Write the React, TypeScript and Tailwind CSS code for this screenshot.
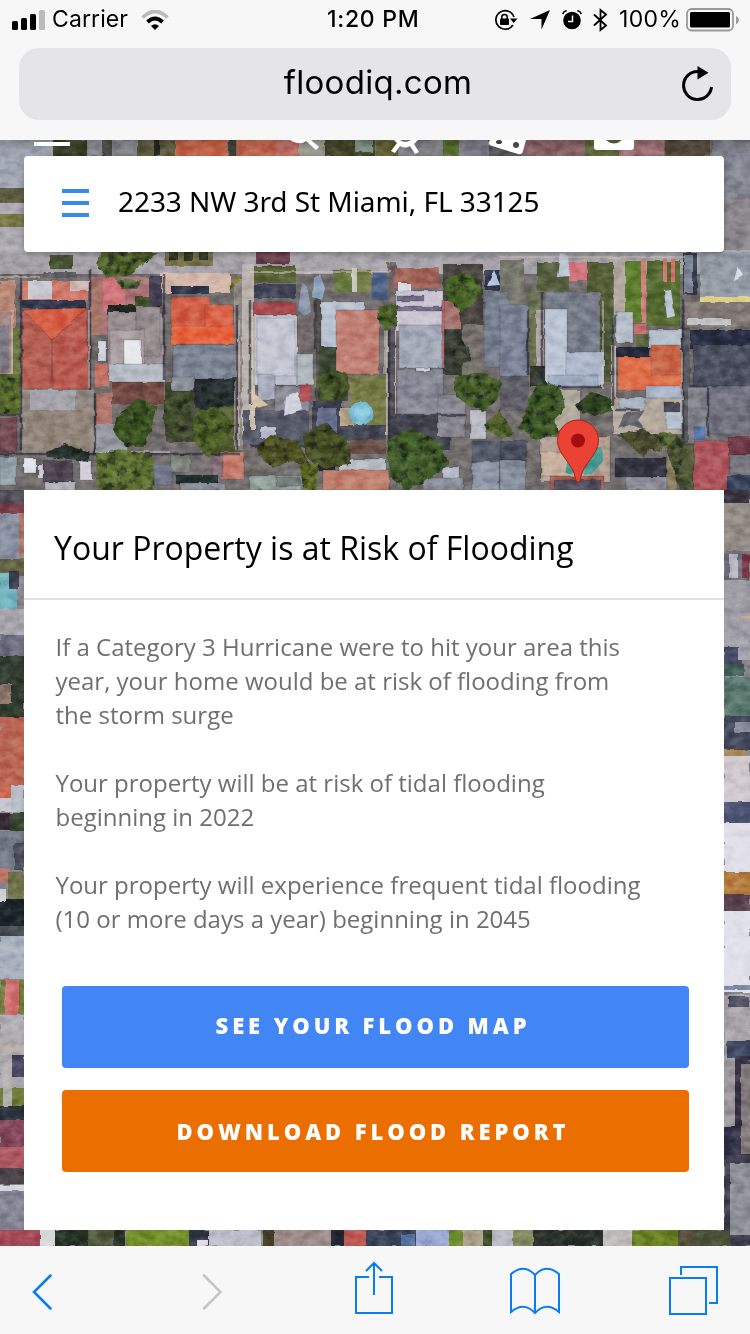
import React from "react";

type Block = [number, number, number, number, string];
type Shape = [string, string];

const ground: Block[] = [
  [0, 140, 750, 1106, "#8b888d"],
  [0, 140, 750, 16, "#77736c"],
  [0, 250, 750, 26, "#a7a3a9"],
  [0, 140, 53, 60, "#a3a8b4"],
  [0, 200, 24, 50, "#aca8ae"],
  [0, 188, 24, 15, "#5e5c40"],
  [0, 214, 24, 13, "#7a7a48"],
  [0, 274, 750, 218, "#736e6c"],
];

const strip: Block[] = [
  [53, 140, 34, 16, "#3c4227"], [87, 140, 50, 16, "#8d8e93"], [102, 140, 10, 16, "#4b4c45"],
  [137, 140, 38, 16, "#625e40"], [154, 140, 6, 16, "#262a24"], [175, 140, 52, 16, "#cf6a4b"],
  [228, 140, 8, 16, "#454037"], [237, 140, 62, 16, "#cc6b50"], [276, 140, 22, 16, "#c8766a"],
  [299, 140, 26, 16, "#a0a091"], [325, 140, 50, 16, "#484c2b"], [355, 140, 18, 12, "#82948b"],
  [376, 140, 22, 16, "#686738"], [398, 140, 45, 16, "#8a898e"], [443, 140, 16, 16, "#5a722b"],
  [459, 140, 30, 16, "#858490"], [489, 140, 32, 16, "#595455"], [524, 140, 60, 16, "#92696b"],
  [585, 140, 34, 16, "#636b3c"], [619, 140, 45, 16, "#a8787d"], [665, 140, 45, 16, "#574e3e"],
  [713, 140, 37, 58, "#868892"], [724, 198, 26, 52, "#8b858b"],
];

const yards: Block[] = [
  [50, 255, 23, 14, "#43502f"], [43, 272, 34, 6, "#5b5c5f"], [165, 250, 48, 16, "#77724a"],
  [169, 252, 9, 8, "#2f3621"], [184, 252, 9, 8, "#2f3621"], [199, 252, 9, 8, "#2f3621"],
  [160, 273, 70, 20, "#d3b9aa"], [171, 286, 38, 8, "#34364b"], [256, 250, 34, 14, "#693f49"],
  [254, 266, 42, 17, "#596235"], [250, 284, 46, 14, "#414456"],
  [334, 270, 18, 22, "#64763b"], [357, 270, 14, 22, "#78804a"], [352, 268, 5, 24, "#cac5bd"],
  [0, 280, 15, 95, "#b98a76"], [0, 312, 12, 60, "#a38682"], [0, 325, 9, 48, "#807c85"],
  [13, 328, 8, 50, "#6b7540"], [0, 374, 20, 40, "#546530"],
  [22, 281, 66, 19, "#cd7768"], [28, 281, 24, 18, "#c9c9ce"], [70, 281, 19, 10, "#d0b9b4"],
  [22, 300, 64, 9, "#33384d"],
  [91, 277, 58, 58, "#a87172"], [92, 280, 9, 55, "#a57767"], [103, 278, 22, 32, "#cf7378"],
  [107, 305, 53, 10, "#20291e"], [135, 296, 22, 12, "#40512b"], [149, 276, 13, 30, "#444050"],
  [96, 336, 13, 27, "#6e6d6c"], [95, 363, 14, 24, "#c06d60"],
  [112, 382, 52, 22, "#744a43"], [22, 389, 72, 64, "#928a81"], [30, 390, 45, 20, "#a4a3aa"],
  [26, 410, 65, 38, "#918477"], [96, 393, 16, 32, "#ae7469"], [96, 424, 30, 28, "#9698a0"],
  [165, 382, 42, 60, "#3f452f"], [195, 378, 40, 30, "#292e37"], [205, 404, 35, 50, "#545d31"],
  [234, 280, 9, 170, "#8f8780"], [242, 264, 12, 170, "#bab2ad"],
  [243, 410, 66, 36, "#575a67"], [250, 310, 5, 120, "#d1c4b2"],
  [297, 303, 21, 48, "#746b6c"], [316, 294, 5, 130, "#57534b"],
  [319, 346, 29, 55, "#3e4834"], [350, 376, 36, 63, "#777b45"],
  [312, 401, 30, 50, "#3c4050"], [340, 425, 46, 16, "#434652"], [317, 408, 20, 25, "#666c88"],
  [340, 408, 14, 18, "#b5a387"], [350, 440, 36, 14, "#6b5147"],
  [386, 330, 10, 105, "#b7aaa3"], [388, 318, 7, 130, "#54525a"],
  [372, 272, 17, 28, "#4d6386"], [387, 262, 9, 36, "#6d6664"],
  [394, 268, 45, 20, "#a26559"], [398, 283, 13, 8, "#dadde5"],
  [443, 264, 40, 110, "#4c463f"], [444, 301, 16, 28, "#a3706a"], [445, 330, 16, 45, "#363b33"],
  [462, 325, 25, 50, "#77716c"],
  [390, 416, 60, 34, "#41424b"], [485, 270, 20, 20, "#31384e"],
  [500, 260, 24, 45, "#76766b"], [537, 262, 32, 29, "#596141"], [569, 262, 18, 19, "#d0707a"],
  [587, 262, 26, 90, "#566036"], [600, 312, 13, 70, "#4d5836"],
  [527, 290, 14, 75, "#6d7152"], [536, 310, 8, 58, "#aaa49e"],
  [614, 260, 11, 55, "#b2a8a0"], [625, 261, 17, 61, "#5c7c2b"], [641, 259, 5, 64, "#cb8179"],
  [647, 261, 33, 65, "#566b30"], [663, 259, 4, 23, "#d1756f"], [671, 259, 4, 23, "#d1756f"],
  [634, 324, 12, 10, "#c56e69"], [636, 334, 12, 14, "#566139"],
  [683, 253, 14, 42, "#34404e"], [684, 255, 9, 38, "#7d8594"], [700, 252, 50, 45, "#939ba4"],
  [700, 297, 50, 5, "#ddce89"], [685, 302, 65, 25, "#837a76"], [687, 318, 44, 7, "#c3c1c5"],
  [685, 330, 65, 18, "#292d3f"],
  [612, 347, 38, 10, "#262a3a"], [611, 345, 5, 65, "#bdb3ab"],
  [681, 328, 9, 115, "#5a5b60"], [613, 398, 70, 36, "#b5aa9d"],
  [688, 388, 20, 55, "#808087"], [555, 390, 25, 42, "#b0a89c"],
  [530, 366, 35, 20, "#33382f"], [500, 376, 29, 35, "#616067"],
];

const roofs: Block[] = [
  [108, 312, 55, 59, "#9a8f91"], [136, 307, 24, 49, "#968c8d"], [110, 330, 34, 34, "#aa9e9f"],
  [124, 340, 17, 25, "#e8e9ed"], [109, 364, 56, 18, "#b5bcc4"], [98, 341, 8, 19, "#d4d7dd"],
  [171, 297, 39, 30, "#d15d44"], [205, 305, 28, 22, "#d96246"],
  [171, 326, 63, 18, "#e5633b"], [173, 345, 61, 34, "#7e8594"], [172, 377, 22, 14, "#8e929b"],
  [253, 302, 43, 14, "#a94d50"],
  [254, 315, 43, 70, "#bec1cd"], [257, 318, 38, 58, "#c4c7d1"], [297, 354, 16, 31, "#adb5b9"],
  [258, 374, 17, 26, "#aaaebd"], [275, 386, 34, 25, "#8a8994"], [300, 385, 11, 16, "#b34f54"],
  [321, 302, 43, 45, "#bac3d1"], [336, 310, 43, 64, "#c08072"],
  [396, 291, 47, 40, "#cbc5d2"], [397, 296, 27, 5, "#736b85"], [397, 306, 45, 5, "#736b85"],
  [399, 325, 43, 43, "#a5aab8"], [397, 370, 46, 45, "#898a95"], [438, 395, 27, 42, "#8b8993"],
  [416, 368, 15, 3, "#d7d7dc"],
  [484, 292, 25, 75, "#757c8b"], [500, 305, 28, 71, "#7c8394"],
  [545, 292, 55, 62, "#777d87"], [545, 309, 22, 75, "#bcc5d4"], [566, 352, 38, 34, "#b0b9ca"],
  [548, 375, 50, 12, "#a1adbf"],
  [616, 312, 17, 31, "#b7bfc9"], [649, 330, 33, 18, "#b4bfca"],
  [618, 357, 64, 33, "#dd6e47"], [651, 345, 30, 30, "#c86849"], [646, 386, 35, 12, "#afb9ca"],
  [619, 398, 26, 11, "#a8b1bf"], [666, 411, 16, 18, "#b7c2ce"], [664, 402, 16, 10, "#4c4955"],
  [693, 345, 57, 42, "#4c505f"], [708, 386, 42, 48, "#74737f"], [694, 427, 11, 13, "#5573a8"],
  [0, 418, 17, 34, "#734c51"], [0, 457, 16, 28, "#96a3a9"], [24, 458, 12, 15, "#e2e5e9"],
  [43, 460, 30, 22, "#514751"], [80, 461, 12, 19, "#d1cfd7"], [38, 464, 5, 14, "#d1d4db"],
  [45, 482, 30, 8, "#b5b5bd"],
  [154, 465, 18, 20, "#75798a"], [171, 454, 19, 18, "#84877e"], [220, 452, 24, 27, "#c47c6c"],
  [212, 455, 11, 22, "#856e74"], [176, 475, 42, 9, "#22302d"], [180, 483, 45, 7, "#8d8f9a"],
  [260, 427, 16, 11, "#bdbfd0"],
  [250, 476, 51, 14, "#94a49c"], [276, 477, 24, 9, "#75807c"], [340, 459, 46, 12, "#b8bdc4"],
  [323, 470, 66, 20, "#c0806d"], [315, 462, 20, 8, "#242832"],
  [470, 410, 16, 29, "#b8bbc2"], [472, 441, 55, 20, "#565b69"], [472, 462, 27, 28, "#9199a8"],
  [443, 467, 16, 15, "#b6b9ca"], [423, 478, 40, 12, "#8e909b"],
  [500, 440, 26, 20, "#494e5b"], [500, 460, 25, 30, "#868e9c"],
  [541, 437, 69, 45, "#b6a193"], [541, 452, 40, 24, "#c8b29e"],
  [550, 476, 54, 14, "#a25c50"], [554, 480, 47, 10, "#514d5c"],
  [615, 458, 51, 19, "#34343f"], [626, 477, 41, 13, "#8b8c96"], [667, 446, 10, 44, "#8d8060"],
  [680, 444, 14, 46, "#545a38"], [694, 441, 35, 49, "#ae565b"], [728, 436, 22, 19, "#6f3944"],
  [730, 455, 20, 18, "#7d7980"], [727, 475, 23, 15, "#39455c"],
];

const sideStrips: Block[] = [
  [0, 490, 24, 14, "#524d55"], [0, 503, 24, 10, "#7b404a"], [0, 513, 20, 50, "#8990a0"],
  [19, 513, 5, 44, "#ac7769"], [0, 559, 24, 17, "#656444"], [0, 573, 17, 36, "#72b4be"],
  [9, 571, 10, 18, "#3a3c4c"], [0, 609, 24, 26, "#a8a5ad"], [0, 635, 24, 24, "#6e7080"],
  [0, 656, 24, 61, "#303a2c"], [0, 684, 11, 20, "#8b746a"], [0, 717, 24, 70, "#ba6655"],
  [0, 787, 11, 11, "#ce694e"], [11, 785, 13, 27, "#b3bbc4"], [0, 798, 11, 14, "#c7c8d0"],
  [0, 813, 10, 17, "#392a33"], [10, 813, 14, 28, "#37452e"], [0, 831, 24, 39, "#737885"],
  [14, 843, 10, 27, "#4e505c"], [0, 868, 10, 14, "#bc7666"], [8, 872, 16, 28, "#6e7048"],
  [0, 899, 24, 36, "#1d2529"], [0, 889, 6, 13, "#d2d1cf"],
  [0, 926, 24, 10, "#4b4e54"], [0, 936, 24, 43, "#aab2be"],
  [0, 980, 24, 34, "#717b38"], [5, 980, 14, 38, "#d17373"], [0, 1015, 24, 50, "#b0adb0"],
  [0, 1048, 24, 2, "#c5aa91"], [0, 1062, 24, 26, "#aaa8ae"], [12, 1055, 12, 22, "#4b4862"],
  [0, 1088, 24, 18, "#717e39"], [3, 1062, 9, 46, "#b2b0ae"], [0, 1106, 24, 14, "#293038"],
  [0, 1120, 24, 27, "#84475a"], [0, 1147, 24, 21, "#ac5660"], [0, 1168, 24, 16, "#4b4448"],
  [0, 1185, 24, 6, "#d2d5dd"], [0, 1191, 24, 42, "#868593"], [0, 1230, 40, 16, "#a44a56"],
  [724, 490, 26, 13, "#3a3440"], [724, 503, 26, 48, "#928b84"], [724, 551, 26, 30, "#747079"],
  [729, 554, 9, 24, "#b8b6c0"], [742, 554, 8, 24, "#7b3848"], [724, 580, 26, 67, "#a09ea4"],
  [741, 617, 9, 2, "#caa37e"], [724, 647, 18, 17, "#484a65"], [738, 638, 12, 22, "#a2a4ae"],
  [724, 664, 20, 12, "#436058"], [724, 677, 26, 39, "#5a786d"], [724, 716, 26, 34, "#44495b"],
  [735, 722, 15, 10, "#898d9b"], [724, 750, 22, 5, "#b18955"], [724, 756, 26, 46, "#d0cacd"],
  [724, 802, 26, 21, "#4d5371"], [724, 823, 26, 49, "#e0dee6"], [724, 872, 26, 23, "#b37b3d"],
  [724, 894, 26, 18, "#5b444d"], [724, 911, 26, 81, "#e0e1ea"], [724, 985, 26, 5, "#8190ab"],
  [724, 994, 26, 47, "#aaa5a7"], [728, 996, 21, 11, "#505263"], [724, 1041, 26, 86, "#9b979b"],
  [727, 1041, 23, 17, "#414b62"], [735, 1056, 15, 102, "#373343"], [741, 1064, 9, 90, "#817979"],
  [724, 1127, 14, 36, "#34344a"], [724, 1155, 26, 91, "#40404f"], [730, 1163, 20, 72, "#8e9097"],
];

const bottomStrip: Block[] = [
  [40, 1230, 15, 16, "#d6d8d9"], [55, 1230, 70, 16, "#273326"], [88, 1230, 26, 16, "#4e5838"],
  [126, 1230, 63, 16, "#728d27"], [189, 1230, 20, 16, "#333849"], [197, 1240, 11, 6, "#dedae0"],
  [209, 1230, 52, 16, "#bbbfc9"], [263, 1230, 11, 16, "#463f27"], [274, 1230, 58, 16, "#9b8c89"],
  [331, 1230, 13, 16, "#272a35"], [344, 1230, 22, 16, "#bd5951"], [366, 1230, 50, 16, "#374255"],
  [401, 1234, 14, 12, "#5870a0"], [416, 1230, 33, 16, "#99a9d1"], [449, 1230, 14, 16, "#6a8a2d"],
  [463, 1230, 20, 16, "#aea28b"], [483, 1230, 9, 16, "#3b4a25"], [492, 1230, 21, 16, "#b8bbc2"],
  [513, 1230, 20, 16, "#858c61"], [533, 1230, 70, 16, "#293129"], [603, 1230, 29, 16, "#c3bebd"],
  [632, 1230, 46, 16, "#6b8122"], [678, 1230, 16, 16, "#59503a"], [694, 1230, 36, 16, "#485036"],
];

const outlines: Shape[] = [
  ["22,310 87,308 89,389 22,389", "#b7594d"],
  ["23,310 86,308 52,340", "#d65d43"],
  ["23,310 52,340 51,389 22,389", "#b46052"],
  ["52,340 86,309 89,389 53,389", "#b95b50"],
];

const trees: Shape[] = [
  ["100,252 158,252 143,264 132,274 108,278 98,268", "#526629"],
  ["114,278 142,280 137,289 122,288", "#57703a"],
  ["117,417 138,398 158,406 151,430 145,447 126,446 113,431", "#405821"],
  ["164,400 192,390 188,440 169,432 163,417", "#46512e"],
  ["193,417 210,402 235,424 219,446 209,458 195,443", "#516326"],
  ["96,454 120,449 152,455 155,490 98,490", "#617431"],
  ["195,380 236,378 232,405 200,410", "#2d3434"],
  ["46,452 65,444 90,453 88,461 48,457", "#26322c"],
  ["317,378 331,368 347,374 349,390 337,401 321,402", "#4c5c29"],
  ["257,446 272,435 299,442 309,464 288,462 273,468 258,455", "#525423"],
  ["304,435 326,423 350,444 351,465 322,468 307,458", "#4c5526"],
  ["300,464 318,464 317,490 302,490", "#687327"],
  ["379,308 397,304 397,327 386,330 378,319", "#4f6328"],
  ["387,440 411,428 440,442 449,464 425,482 407,490 390,476", "#45612a"],
  ["445,280 461,273 476,276 482,292 473,304 462,312 447,300", "#4d6926"],
  ["449,344 460,338 469,348 470,362 455,366", "#414739"],
  ["455,378 480,371 502,382 497,399 484,411 468,405 455,395", "#496029"],
  ["530,398 542,379 562,390 565,408 553,421 561,433 535,440 520,427", "#425d27"],
  ["576,405 591,392 610,398 612,411 596,416 582,414", "#314821"],
  ["484,426 500,410 514,434 500,440", "#55672b"],
  ["616,434 642,430 665,439 660,452 650,448 643,458 630,444", "#4c4d2d"],
  ["666,445 676,434 686,440 681,468 695,490 680,490", "#4b5633"],
  ["660,431 677,435 666,449 657,444", "#63713a"],
  ["0,375 19,378 21,410 4,414", "#5b702b"],
  ["240,281 235,274 230,289", "#7f7128"],
];

const details: Shape[] = [
  ["302,282 308,290 311,312 304,316 298,310", "#8793a8"],
  ["314,278 320,274 325,288 322,300 313,297", "#90a5bc"],
  ["560,252 568,256 570,276 557,277", "#bdc9d5"],
  ["738,266 743,275 734,280", "#d5dee3"],
  ["664,291 671,290 675,316 667,318", "#bac5d3"],
  ["494,270 487,286 500,285", "#b9c6df"],
  ["250,390 268,405 257,408 250,400", "#d7c4a7"],
  ["286,397 298,392 302,409 284,416", "#d1d2dc"],
  ["570,450 602,447 603,461 592,474 565,473", "#499d95"],
  ["624,414 645,410 638,420 646,430 629,425 618,429", "#6a6870"],
];

function Blocks({ items }: { items: Block[] }) {
  return (
    <>
      {items.map(([x, y, w, h, fill], i) => (
        <rect key={i} x={x} y={y} width={w} height={h} fill={fill} />
      ))}
    </>
  );
}

function Shapes({ items }: { items: Shape[] }) {
  return (
    <>
      {items.map(([points, fill], i) => (
        <polygon key={i} points={points} fill={fill} />
      ))}
    </>
  );
}

function AerialMap() {
  return (
    <svg className="absolute inset-0" width="750" height="1106" viewBox="0 140 750 1106" aria-hidden="true">
      <defs>
        <filter id="rough" x="0" y="130" width="750" height="1126" filterUnits="userSpaceOnUse" colorInterpolationFilters="sRGB">
          <feTurbulence type="fractalNoise" baseFrequency="0.09" numOctaves="2" seed="7" result="n" />
          <feDisplacementMap in="SourceGraphic" in2="n" scale="3" xChannelSelector="R" yChannelSelector="G" result="d" />
          <feGaussianBlur in="d" stdDeviation="0.5" />
        </filter>
        <filter id="mottle" x="0" y="140" width="750" height="1106" filterUnits="userSpaceOnUse" colorInterpolationFilters="sRGB">
          <feTurbulence type="fractalNoise" baseFrequency="0.09 0.13" numOctaves="4" seed="12" />
          <feColorMatrix values="2 0 0 0 -0.5  2 0 0 0 -0.5  2 0 0 0 -0.46  0 0 0 0 1" />
        </filter>
        <filter id="foliage" x="0" y="130" width="750" height="1126" filterUnits="userSpaceOnUse" colorInterpolationFilters="sRGB">
          <feTurbulence type="fractalNoise" baseFrequency="0.12" numOctaves="3" seed="4" result="n" />
          <feColorMatrix in="n" values="0 0 0 0 0.08  0 0 0 0 0.11  0 0 0 0 0.09  0 2.4 0 0 -1.1" result="dark" />
          <feComposite in="dark" in2="SourceAlpha" operator="in" result="shade" />
          <feMerge result="m">
            <feMergeNode in="SourceGraphic" />
            <feMergeNode in="shade" />
          </feMerge>
          <feDisplacementMap in="m" in2="n" scale="5" xChannelSelector="R" yChannelSelector="B" result="d" />
          <feGaussianBlur in="d" stdDeviation="0.5" />
        </filter>
        <linearGradient id="topShade" x1="0" y1="0" x2="0" y2="1">
          <stop offset="0" stopColor="#000" stopOpacity="0.2" />
          <stop offset="1" stopColor="#000" stopOpacity="0" />
        </linearGradient>
      </defs>
      <Blocks items={ground} />
      <g filter="url(#rough)">
        <Blocks items={strip} />
        <Blocks items={yards} />
        <g stroke="#25273a" strokeOpacity="0.2" strokeWidth="1">
          <Blocks items={roofs} />
          <Shapes items={outlines} />
        </g>
        <Shapes items={details} />
        <circle cx="361" cy="413" r="12" fill="#79bad2" />
        <circle cx="362" cy="412" r="8" fill="#8bcbe0" />
        <g fill="none" stroke="#282a37" strokeWidth="2.5" strokeOpacity="0.65">
          <path d="M21 275V450M90 270V390M95 392V454M164 275V380M237 305V450M250 300V405M315 300V350M389 315V445M443 300V370M528 310V375M542 292V382M613 325V405M683 300V440M708 388V437" />
          <path d="M0 454H240M250 446H310M395 415H465M615 410H640M690 386H708M0 415H20M545 387H602" />
        </g>
        <g fill="none" stroke="#d4c7be" strokeWidth="1.5" strokeOpacity="0.65">
          <path d="M12 310V373M89 310V388M239 320V445M296 317V350M385 310V373M603 300V390M682 350V400M96 452H170M500 257H685M250 272H390M0 277H40" />
        </g>
        <path d="M443 300V368" fill="none" stroke="#b76467" strokeWidth="2" />
      </g>
      <g filter="url(#foliage)">
        <Shapes items={trees} />
      </g>
      <g filter="url(#rough)">
        <Blocks items={sideStrips} />
        <Blocks items={bottomStrip} />
      </g>
      <rect y="140" width="750" height="1106" filter="url(#mottle)" className="opacity-30 mix-blend-soft-light" />
      <rect y="140" width="750" height="16" fill="url(#topShade)" />
      <g fill="#fff">
        <path d="M34 142h36v4H34z" />
        <path d="M290 140q10 6 16 1l10 9 3-3-8-7z" />
        <path d="M394 140h6q5 4 11 0h7l-4 4 5 8-4 2-5-8q-5 3-10 0l-5 7-4-2 6-8z" />
        <path fillRule="evenodd" d="M490 140h36l-3 11q-1 4-5 3l-26-8q-4-1-3-4zm6 2a3 2 0 1 0 6 0 3 2 0 1 0-6 0zm17 3a3 3 0 1 0 6 0 3 3 0 1 0-6 0z" />
        <path fillRule="evenodd" d="M594 140h40v7q0 3-3 3h-34q-3 0-3-3zm12 0q8 7 16 0z" />
      </g>
      <path d="M578 482c-2 0-2-1-2.500-4-2-14-18-23-18-37.500a20.500 20.500 0 0 1 41 0c0 14.500-16 23.500-18 37.500-.5 3-.5 4-2.500 4z" fill="#ea4335" stroke="#a52714" />
      <circle cx="578" cy="440.500" r="7" fill="#a50e0e" />
    </svg>
  );
}

function StatusBar() {
  return (
    <div className="flex h-10 items-center text-[23px] leading-10 text-black">
      <svg className="ml-3" width="34" height="20" viewBox="0 0 34 20">
        <rect y="11" width="6" height="9" rx="1.500" />
        <rect x="9" y="8" width="6" height="12" rx="1.500" />
        <rect x="18" y="4" width="6" height="16" rx="1.500" />
        <rect x="27" width="6" height="20" rx="1.500" fill="#bbb" />
      </svg>
      <span className="-mt-0.5 ml-1.5 w-[84px] tracking-[0.1px]">Carrier</span>
      <svg className="ml-[5px]" width="28" height="20" viewBox="0 0 28 20">
        <path d="M1.500 7.500Q14-4.500 26.500 7.500" fill="none" stroke="#bbb" strokeWidth="3.800" />
        <path d="M6.500 12Q14 5 21.500 12" fill="none" stroke="#000" strokeWidth="3.800" />
        <path d="M10 16q4-3.500 8 0l-4 4z" />
      </svg>
      <span className="-mt-0.5 ml-[158px] w-[112px] whitespace-nowrap font-medium tracking-[0.7px]">1:20 PM</span>
      <svg className="ml-[55px]" width="24" height="22" viewBox="0 0 24 22">
        <path d="M19 16A9.300 9.300 0 1 1 20 8" fill="none" stroke="#000" strokeWidth="1.700" />
        <path d="M16 9.500h7.500L19.700 14z" />
        <rect x="6" y="9.500" width="9" height="6.500" rx="1" />
        <path d="M7.800 10V8q0-2.500 2.700-2.500T13.200 8v2" fill="none" stroke="#000" strokeWidth="1.500" />
      </svg>
      <svg className="ml-3" width="20" height="20" viewBox="0 0 20 20"><path d="M20 0 11.500 19.500V9H0z" /></svg>
      <svg className="ml-3" width="20" height="20" viewBox="0 0 20 20">
        <circle cx="10" cy="10.500" r="8.800" />
        <path d="M.8 4.200Q1.500 1.200 4.700.8M19.200 4.200Q18.500 1.200 15.300.8" fill="none" stroke="#000" strokeWidth="1.500" />
        <path d="M10.500 5.500v6H6" fill="none" stroke="#f7f7f7" strokeWidth="1.500" />
      </svg>
      <svg className="ml-[11px]" width="15" height="24" viewBox="0 0 15 24">
        <path d="m1 6.500 12 11L7.500 22V2L13 6.500l-12 11" fill="none" stroke="#000" strokeWidth="1.800" />
      </svg>
      <span className="-mt-0.5 ml-[11px] w-[65px] whitespace-nowrap tracking-[0.3px]">100%</span>
      <svg className="ml-0.5" width="53" height="24" viewBox="0 0 53 24">
        <rect x="1" y="1" width="46" height="21.500" rx="4.500" fill="none" stroke="#999" strokeWidth="1.800" />
        <rect x="4" y="4" width="40" height="15.500" rx="1.500" />
        <path d="M50 8q2.800 1 2.800 4T50 16z" fill="#999" />
      </svg>
    </div>
  );
}

function BrowserHeader() {
  return (
    <header className="h-[140px] shrink-0 bg-[#f7f7f7] font-[Inter,sans-serif]">
      <StatusBar />
      <div className="relative mx-[19px] mt-2 flex h-[72px] items-center justify-center rounded-[20px] bg-[#e5e5e7]">
        <span className="-mt-1 ml-[6px] text-[33px] leading-10 tracking-[0.3px] text-black">floodiq.com</span>
        <svg className="absolute right-[17px] top-[17px]" width="32" height="38" viewBox="0 0 32 38">
          <path d="M16 6.500A14 14 0 1 0 29.500 22" fill="none" stroke="#000" strokeWidth="3" />
          <path d="m15.500 1 11 6.700-11 6.800z" />
        </svg>
      </div>
    </header>
  );
}

function BrowserToolbar() {
  return (
    <footer className="flex h-[88px] shrink-0 items-start bg-[#f7f7f7]">
      <svg className="ml-8 mt-7" width="20" height="36" viewBox="0 0 20 36"><path d="M18.500 1.500 2 18l16.500 16.500" fill="none" stroke="#087cf5" strokeWidth="2.500" strokeLinecap="round" /></svg>
      <svg className="ml-[150px] mt-7" width="20" height="36" viewBox="0 0 20 36"><path d="M2 1.500 18.500 18 2 34.500" fill="none" stroke="#c5c5c5" strokeWidth="2.500" strokeLinecap="round" /></svg>
      <svg className="ml-[133px] mt-[15px]" width="38" height="54" viewBox="0 0 38 54">
        <path d="M14 16H1v36h36V16H24M19 34V2M11 10l8-8 8 8" fill="none" stroke="#087cf5" strokeWidth="2" />
      </svg>
      <svg className="ml-[117px] mt-[21px]" width="50" height="49" viewBox="0 0 50 49">
        <path d="M25 8Q14-4 1 7v38q13-11 24 1 11-12 24-1V7Q36-4 25 8v38" fill="none" stroke="#087cf5" strokeWidth="2" />
      </svg>
      <svg className="ml-[109px] mt-5" width="49" height="49" viewBox="0 0 49 49">
        <path d="M1 12h36v36H1zM12 9V1h36v36h-8" fill="none" stroke="#087cf5" strokeWidth="2" />
      </svg>
    </footer>
  );
}

export default function App() {
  return (
    <div className="flex h-[1334px] w-[750px] flex-col overflow-hidden bg-white">
      <BrowserHeader />
      <main className="relative h-[1106px] shrink-0 overflow-hidden font-['Open_Sans',sans-serif]">
        <AerialMap />
        <div className="relative flex flex-col px-6 pt-4 pr-[26px]">
          <div className="flex h-24 items-center rounded bg-white pl-[38px] shadow-[0_2px_6px_rgba(0,0,0,0.3)]">
            <svg className="-mt-0.5" width="27" height="28" viewBox="0 0 27 28"><path d="M0 0h27v4H0zM0 12h27v4H0zM0 24h27v4H0z" fill="#368bea" /></svg>
            <span className="-mt-1.5 ml-[29px] whitespace-nowrap font-['Noto_Sans',sans-serif] text-[28px] tracking-[-0.06px] text-black">2233 NW 3rd St Miami, FL 33125</span>
          </div>
          <section className="mt-[238px] h-[740px] bg-white">
            <h1 className="h-[110px] whitespace-nowrap border-b-2 border-[#e0e1e3] pl-[30px] text-[32px] leading-[116px] text-black">Your Property is at Risk of Flooding</h1>
            <div className="flex flex-col gap-[34px] pl-[31.5px] pt-[30px] text-[24px] leading-[34px] text-[#6f6f6f]">
              <p className="whitespace-nowrap">If a Category 3 Hurricane were to hit your area this<br />year, your home would be at risk of flooding from<br />the storm surge</p>
              <p className="whitespace-nowrap">Your property will be at risk of tidal flooding<br />beginning in 2022</p>
              <p className="whitespace-nowrap">Your property will experience frequent tidal flooding<br />(10 or more days a year) beginning in 2045</p>
            </div>
            <div className="ml-[37.5px] mt-[50px] flex w-[627px] flex-col gap-[22px] text-[22px] font-extrabold tracking-[3.9px] text-white">
              <button className="h-[82px] rounded bg-[#4285f4] pb-[3px] pr-1">SEE YOUR FLOOD MAP</button>
              <button className="h-[82px] rounded bg-[#eb6f00] pr-1">DOWNLOAD FLOOD REPORT</button>
            </div>
          </section>
        </div>
      </main>
      <BrowserToolbar />
    </div>
  );
}
